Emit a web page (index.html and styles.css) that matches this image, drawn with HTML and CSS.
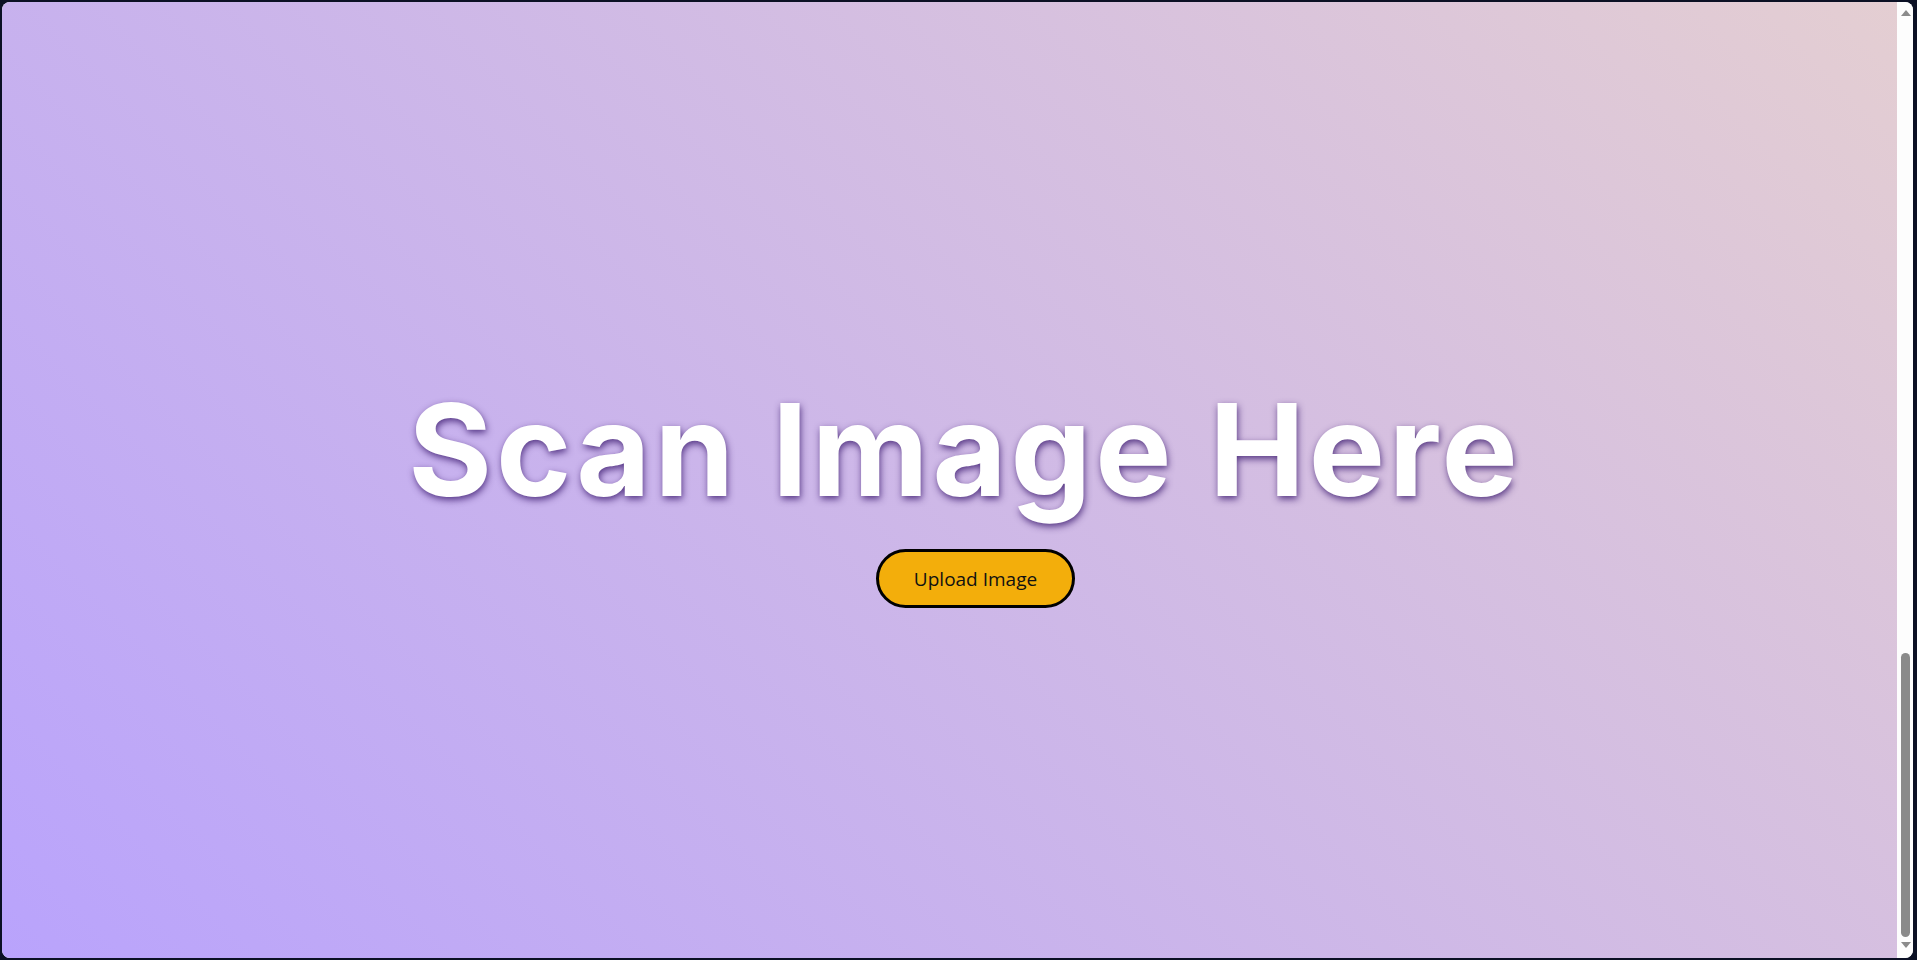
FILE: index.html
```html
<!DOCTYPE html>
<html lang="en">
<head>
<meta charset="utf-8">
<title>Scan Image</title>
<link rel="stylesheet" href="styles.css">
</head>
<body>
  <div class="window">
    <main class="page">
      <h1 class="title">Scan Image Here</h1>
      <button class="upload" type="button">Upload Image</button>
    </main>
    <div class="scrollbar">
      <span class="arrow arrow-up"></span>
      <div class="track"><div class="thumb"></div></div>
      <span class="arrow arrow-down"></span>
    </div>
  </div>
</body>
</html>
```
FILE: styles.css
```css
* { box-sizing: border-box; }
html, body { height: 100%; }
body {
  margin: 0;
  height: 960px;
  padding: 2px 4px 2px 2px;
  background: #0b1024;
  display: flex;
  overflow: hidden;
}
.window {
  flex: 1;
  display: flex;
  border-radius: 8px;
  overflow: hidden;
  background: #fdfdfd;
}
.page {
  flex: 1;
  display: flex;
  flex-direction: column;
  align-items: center;
  justify-content: flex-start;
  padding-top: 373px;
  background: linear-gradient(45deg, #b9a3fc 0%, #e4ced2 100%);
}
.title {
  margin: 0 0 0 31px;
  font-family: Inter, "Liberation Sans", sans-serif;
  font-weight: 700;
  font-size: 128px;
  line-height: 150px;
  letter-spacing: 3.8px;
  color: #ffffff;
  text-shadow: 1px 3px 7px rgba(65, 32, 115, 0.85);
}
.upload {
  margin: 24px 0 0 52px;
  width: 199px;
  height: 59px;
  border: 3px solid #000;
  border-radius: 30px;
  background: #f3ae0b;
  color: #111;
  font-family: "Open Sans", "Noto Sans", sans-serif;
  font-size: 19px;
  padding: 0;
}
.scrollbar {
  width: 16px;
  background: #fdfdfd;
  display: flex;
  flex-direction: column;
  align-items: center;
  padding: 8px 0 10px 1px;
}
.arrow {
  width: 0;
  height: 0;
  border-left: 5px solid transparent;
  border-right: 5px solid transparent;
}
.arrow-up { border-bottom: 6px solid #8b8b8b; }
.arrow-down { border-top: 6px solid #8b8b8b; }
.track {
  flex: 1;
  width: 100%;
  display: flex;
  flex-direction: column;
  justify-content: flex-end;
  align-items: center;
  padding: 0 0 5px;
}
.thumb {
  width: 9px;
  height: 284px;
  border-radius: 5px;
  background: #8a8a8a;
}
```
